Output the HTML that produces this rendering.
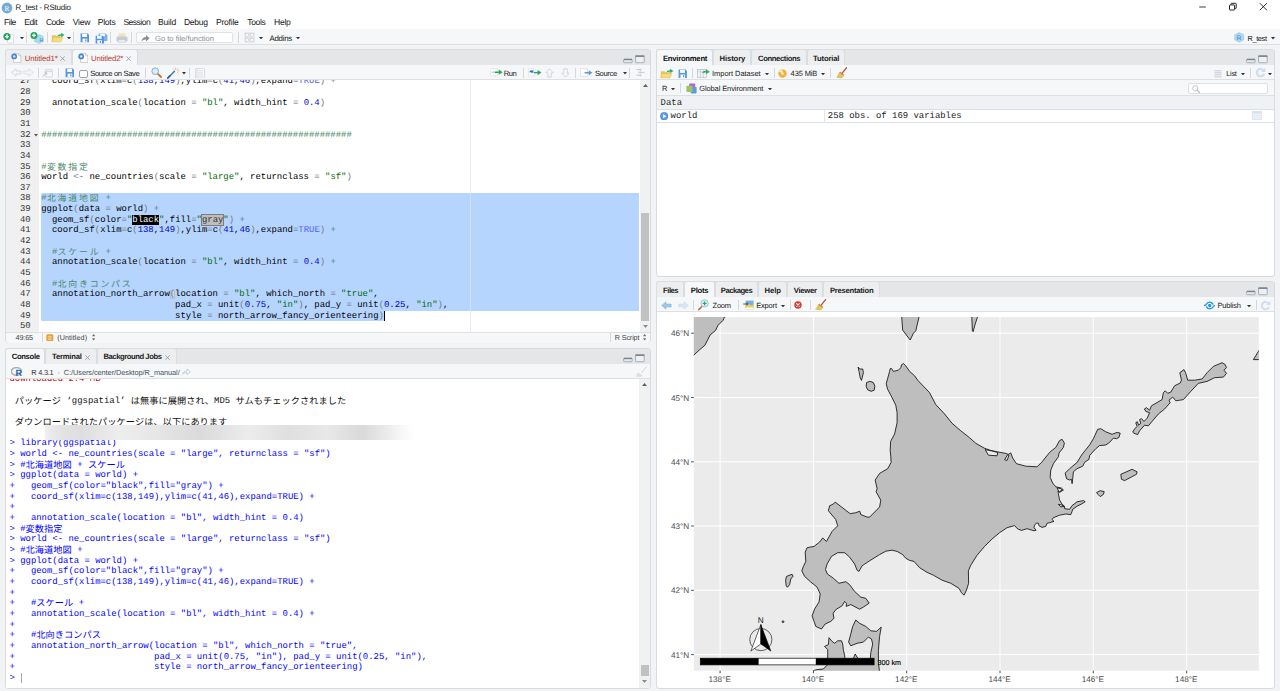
<!DOCTYPE html>
<html lang="ja"><head><meta charset="utf-8"><title>R_test - RStudio</title>
<style>
html,body{margin:0;padding:0;}
body{width:1280px;height:691px;overflow:hidden;position:relative;background:#F1F3F5;font-family:"Liberation Sans",sans-serif;text-rendering:geometricPrecision;-webkit-font-smoothing:antialiased;}
svg text{text-rendering:geometricPrecision;}
.b{position:absolute;display:block;}
.t{position:absolute;white-space:pre;}
.ed{overflow:hidden;background:#fff;}
.cl{position:absolute;white-space:pre;font-family:"Liberation Mono",monospace;font-size:8.93px;line-height:10.65px;height:10.65px;color:#000;}
.cl i{font-style:normal;}
.ln{position:absolute;left:0;text-align:right;font-family:"Liberation Mono",monospace;font-size:8.93px;line-height:10.65px;color:#333;}
.k{color:#4C886B;} .s{color:#036A07;} .n{color:#0000CD;} .o{color:#687687;} .p{color:#7A7A7A;} .c{color:#585CF6;}
.cb{font-weight:normal;background:#000;color:#fff;}
.cg{font-weight:normal;background:#BEBEBE;color:#333;outline:0.6px solid #7d7d7d;outline-offset:-0.6px;}
.cj{display:inline-block;vertical-align:top;margin-top:-0.8px;overflow:visible;}
.je,.jc{display:inline-block;vertical-align:top;white-space:pre;overflow:visible;box-sizing:border-box;font-family:"Liberation Sans","Noto Sans CJK JP",sans-serif;line-height:10.65px;height:10.65px;}
.je{font-size:8.9px;letter-spacing:1.82px;padding-left:0.3px;}
.jc{font-size:9.2px;letter-spacing:0.06px;padding-left:0.03px;}
</style></head>
<body>
<div class="b" style="left:0.00px;top:0.00px;width:1280.00px;height:14.50px;background:#fff;"></div>
<svg class="b" style="left:1.00px;top:1.50px;" width="12" height="12" viewBox="0 0 12 12"><circle cx="6" cy="6" r="5.4" fill="#75AADB"/><text x="6" y="8.6" font-size="7.4" text-anchor="middle" fill="#fff" font-family="Liberation Serif,serif">R</text></svg>
<span class="t" style="left:15.60px;top:1.63px;font-size:8.0px;line-height:12px;color:#1a1a1a;letter-spacing:-0.218px;">R_test - RStudio</span>
<svg class="b" style="left:1196.00px;top:0.00px;" width="80" height="14" viewBox="0 0 80 14"><path d="M3.2 7H9.8" stroke="#6A6A6A" stroke-width="1.3"/><rect x="33.5" y="4.9" width="5.1" height="5.1" rx="0.6" fill="none" stroke="#222" stroke-width="1"/><path d="M35 4.6V3.9Q35 3.3 35.6 3.3H39.6Q40.2 3.3 40.2 3.9V7.9Q40.2 8.5 39.6 8.5H38.9" fill="none" stroke="#222" stroke-width="1"/><path d="M63.8 3.2L70.8 10.2M70.8 3.2L63.8 10.2" stroke="#222" stroke-width="0.95"/></svg>
<div class="b" style="left:0.00px;top:14.50px;width:1280.00px;height:14.50px;background:#fff;"></div>
<span class="t" style="left:4.10px;top:16.42px;font-size:8.6px;line-height:12px;color:#222;letter-spacing:-0.515px;">File</span>
<span class="t" style="left:24.30px;top:16.42px;font-size:8.6px;line-height:12px;color:#222;letter-spacing:-0.530px;">Edit</span>
<span class="t" style="left:46.00px;top:16.42px;font-size:8.6px;line-height:12px;color:#222;letter-spacing:-0.590px;">Code</span>
<span class="t" style="left:72.80px;top:16.42px;font-size:8.6px;line-height:12px;color:#222;letter-spacing:-0.271px;">View</span>
<span class="t" style="left:97.80px;top:16.42px;font-size:8.6px;line-height:12px;color:#222;letter-spacing:-0.304px;">Plots</span>
<span class="t" style="left:123.40px;top:16.42px;font-size:8.6px;line-height:12px;color:#222;letter-spacing:-0.542px;">Session</span>
<span class="t" style="left:158.00px;top:16.42px;font-size:8.6px;line-height:12px;color:#222;letter-spacing:-0.225px;">Build</span>
<span class="t" style="left:184.00px;top:16.42px;font-size:8.6px;line-height:12px;color:#222;letter-spacing:-0.349px;">Debug</span>
<span class="t" style="left:216.00px;top:16.42px;font-size:8.6px;line-height:12px;color:#222;letter-spacing:-0.254px;">Profile</span>
<span class="t" style="left:247.30px;top:16.42px;font-size:8.6px;line-height:12px;color:#222;letter-spacing:-0.395px;">Tools</span>
<span class="t" style="left:274.00px;top:16.42px;font-size:8.6px;line-height:12px;color:#222;letter-spacing:-0.272px;">Help</span>
<div class="b" style="left:0.00px;top:29.00px;width:1280.00px;height:15.60px;background:#F5F7F8;border-bottom:1px solid #DCE0E3;box-sizing:border-box;"></div>
<svg class="b" style="left:3.40px;top:31.60px;" width="13" height="12" viewBox="0 0 13 12"><path d="M4.5 2.5H10.5V11H4.5Z" fill="#fff" stroke="#C9CED2" stroke-width="0.6"/><circle cx="4" cy="4.6" r="3.6" fill="#21A45A"/><path d="M4 2.6V6.6M2 4.6H6" stroke="#fff" stroke-width="1.3"/></svg>
<svg class="b" style="left:19.60px;top:37.00px;" width="4" height="2.4" viewBox="0 0 4 2.4"><path d="M0 0H4L2 2.4Z" fill="#333"/></svg>
<div class="b" style="left:26.00px;top:32.00px;width:1.00px;height:11.00px;background:#D4D8DB;"></div>
<svg class="b" style="left:30.20px;top:31.40px;" width="14" height="13" viewBox="0 0 14 13"><path d="M4.5 5.2L9 3.6L13.2 5.2V10.6L9 12.4L4.5 10.6Z" fill="#A9D7F0" stroke="#8FC8E8" stroke-width="0.5"/><path d="M4.5 5.2L9 6.8L13.2 5.2M9 6.8V12.4" stroke="#B9DDF3" stroke-width="0.5" fill="none"/><text x="9.4" y="10.8" font-size="5.6" fill="#4A88C4" font-family="Liberation Sans,sans-serif">R</text><circle cx="4" cy="4.4" r="3.5" fill="#21A45A"/><path d="M4 2.5V6.3M2.1 4.4H5.9" stroke="#fff" stroke-width="1.2"/></svg>
<div class="b" style="left:46.50px;top:32.00px;width:1.00px;height:11.00px;background:#D4D8DB;"></div>
<svg class="b" style="left:51.20px;top:32.40px;" width="14" height="11" viewBox="0 0 14 11"><path d="M0.8 3.2H4.4L5.4 4.2H10.2V9.8H0.8Z" fill="#E9C45C"/><path d="M0.6 9.9L2.4 5.6H11.8L10 9.9Z" fill="#F7DC83" stroke="#D9B24A" stroke-width="0.4"/><path d="M6.2 4.6C6.8 2.6 8.6 2 10.2 2.2V0.8L13.4 3L10.2 5.2V3.8C8.8 3.6 7.4 3.8 6.2 4.6Z" fill="#2BAE66"/></svg>
<svg class="b" style="left:67.00px;top:37.00px;" width="4" height="2.4" viewBox="0 0 4 2.4"><path d="M0 0H4L2 2.4Z" fill="#333"/></svg>
<div class="b" style="left:73.10px;top:32.00px;width:1.00px;height:11.00px;background:#D4D8DB;"></div>
<svg class="b" style="left:79.60px;top:33.00px;" width="9.8" height="9.8" viewBox="0 0 10 10"><path d="M0.6 0.6H8L9.4 2V9.4H0.6Z" fill="#5796DE"/><rect x="2.2" y="0.9" width="5" height="3.2" fill="#fff"/><rect x="2.6" y="5.8" width="4.8" height="3.6" fill="#fff"/><rect x="5.3" y="6.5" width="1.3" height="2.2" fill="#5796DE"/></svg>
<svg class="b" style="left:94.80px;top:32.60px;" width="13" height="11" viewBox="0 0 13 11"><path d="M3.6 0.5H10.6L12.4 2.2V8H3.6Z" fill="#7FB5E6"/><rect x="5.2" y="0.8" width="4.6" height="2.4" fill="#fff"/><path d="M0.6 2.8H7.6L9 4.2V10.6H0.6Z" fill="#5796DE"/><rect x="2" y="3.1" width="4.6" height="2.6" fill="#fff"/><rect x="2.3" y="7.2" width="4.6" height="3.4" fill="#fff"/><rect x="4.8" y="7.9" width="1.2" height="2" fill="#5796DE"/></svg>
<div class="b" style="left:110.10px;top:32.00px;width:1.00px;height:11.00px;background:#D4D8DB;"></div>
<svg class="b" style="left:115.60px;top:32.60px;" width="12" height="10" viewBox="0 0 12 10"><rect x="2.6" y="0.4" width="6.8" height="4" fill="#F3E3B4"/><rect x="0.5" y="3.6" width="11" height="5" rx="1.2" fill="#C5CCD6"/><rect x="2.2" y="6.6" width="7.6" height="2.8" fill="#E8ECF1" stroke="#B5BDC9" stroke-width="0.4"/></svg>
<div class="b" style="left:130.70px;top:32.00px;width:1.00px;height:11.00px;background:#D4D8DB;"></div>
<div class="b" style="left:136.00px;top:32.40px;width:96.60px;height:10.80px;background:#fff;border:1px solid #DFE3E6;border-radius:2px;box-sizing:border-box;"></div>
<svg class="b" style="left:140.60px;top:34.00px;" width="9" height="8" viewBox="0 0 9 8"><path d="M0.4 7.6C0.8 4.6 2.6 3 5 3V1L8.6 4.2L5 7.4V5.4C3.2 5.3 1.6 6 0.4 7.6Z" fill="#8A9096"/></svg>
<span class="t" style="left:155.00px;top:32.77px;font-size:7.6px;line-height:12px;color:#8A8F94;letter-spacing:-0.008px;">Go to file/function</span>
<div class="b" style="left:238.30px;top:32.00px;width:1.00px;height:11.00px;background:#D4D8DB;"></div>
<svg class="b" style="left:244.40px;top:32.20px;" width="11" height="11" viewBox="0 0 11 11"><rect x="0.3" y="0.3" width="10.4" height="10.4" rx="1" fill="#E3E6E9"/><g fill="#F5F7F8" stroke="#C4C9CE" stroke-width="0.5"><rect x="1.5" y="1.5" width="3.2" height="3.2"/><rect x="6.3" y="1.5" width="3.2" height="3.2"/><rect x="1.5" y="6.3" width="3.2" height="3.2"/><rect x="6.3" y="6.3" width="3.2" height="3.2"/></g></svg>
<svg class="b" style="left:259.40px;top:37.00px;" width="4" height="2.4" viewBox="0 0 4 2.4"><path d="M0 0H4L2 2.4Z" fill="#333"/></svg>
<span class="t" style="left:269.40px;top:32.66px;font-size:7.9px;line-height:12px;color:#222;letter-spacing:-0.259px;">Addins</span>
<svg class="b" style="left:296.20px;top:37.00px;" width="4" height="2.4" viewBox="0 0 4 2.4"><path d="M0 0H4L2 2.4Z" fill="#333"/></svg>
<svg class="b" style="left:1234.20px;top:32.20px;" width="10.4" height="10.8" viewBox="0 0 10.4 10.8"><path d="M0.6 2.8L5.2 0.6L9.8 2.8V8L5.2 10.2L0.6 8Z" fill="#A9D7F0" stroke="#93CBEA" stroke-width="0.5"/><path d="M0.6 2.8L5.2 5L9.8 2.8" stroke="#C9E7F7" stroke-width="0.5" fill="none"/><text x="5.2" y="7.8" text-anchor="middle" font-size="6.4" fill="#3F7FBF" font-family="Liberation Sans,sans-serif">R</text></svg>
<span class="t" style="left:1247.50px;top:32.84px;font-size:7.4px;line-height:12px;color:#222;letter-spacing:-0.381px;">R_test</span>
<svg class="b" style="left:1271.00px;top:37.40px;" width="4" height="2.4" viewBox="0 0 4 2.4"><path d="M0 0H4L2 2.4Z" fill="#333"/></svg>
<div class="b" style="left:4.80px;top:48.60px;width:645.80px;height:294.80px;background:#fff;border:1px solid #D8DCDF;border-radius:3px;box-sizing:border-box;"></div>
<div class="b" style="left:5.80px;top:49.60px;width:643.80px;height:15.40px;background:#E4E6E7;border-radius:2px 2px 0 0;"></div>
<div class="b" style="left:4.80px;top:49.10px;width:66.80px;height:15.90px;background:#ECEEEF;border:1px solid #DADEE0;border-bottom:none;border-radius:3px 3px 0 0;box-sizing:border-box;"></div>
<div class="b" style="left:71.60px;top:48.60px;width:66.60px;height:17.00px;background:#F5F7F8;border:1px solid #D8DCDF;border-bottom:none;border-radius:3px 3px 0 0;box-sizing:border-box;"></div>
<svg class="b" style="left:11.40px;top:52.80px;" width="10.5" height="10" viewBox="0 0 10.5 10"><path d="M2.6 0.6H7.6L9.8 2.8V9.4H2.6Z" fill="#fff" stroke="#A9B0B7" stroke-width="0.6"/><path d="M7.6 0.6V2.8H9.8" fill="none" stroke="#A9B0B7" stroke-width="0.5"/><circle cx="3.2" cy="3.4" r="2.9" fill="#4F86C6"/><circle cx="3.2" cy="3.4" r="1.2" fill="#DCE9F6"/></svg>
<span class="t" style="left:24.80px;top:52.70px;font-size:7.8px;line-height:12px;color:#BE3A34;letter-spacing:-0.102px;">Untitled1*</span>
<svg class="b" style="left:59.60px;top:55.80px;" width="5.2" height="5.2" viewBox="0 0 5.2 5.2"><path d="M0.4 0.4L4.8 4.8M4.8 0.4L0.4 4.8" stroke="#9AA0A6" stroke-width="0.95"/></svg>
<svg class="b" style="left:77.60px;top:52.80px;" width="10.5" height="10" viewBox="0 0 10.5 10"><path d="M2.6 0.6H7.6L9.8 2.8V9.4H2.6Z" fill="#fff" stroke="#A9B0B7" stroke-width="0.6"/><path d="M7.6 0.6V2.8H9.8" fill="none" stroke="#A9B0B7" stroke-width="0.5"/><circle cx="3.2" cy="3.4" r="2.9" fill="#4F86C6"/><circle cx="3.2" cy="3.4" r="1.2" fill="#DCE9F6"/></svg>
<span class="t" style="left:91.00px;top:52.70px;font-size:7.8px;line-height:12px;color:#BE3A34;letter-spacing:-0.162px;">Untitled2*</span>
<svg class="b" style="left:126.40px;top:55.80px;" width="5.2" height="5.2" viewBox="0 0 5.2 5.2"><path d="M0.4 0.4L4.8 4.8M4.8 0.4L0.4 4.8" stroke="#9AA0A6" stroke-width="0.95"/></svg>
<svg class="b" style="left:622.80px;top:54.60px;" width="23" height="9" viewBox="0 0 23 9"><rect x="0.6" y="4.2" width="8.6" height="3.5" rx="0.8" fill="#E6E9EC" stroke="#97A1A9" stroke-width="0.8"/><path d="M0.8 4.5H9" stroke="#77838D" stroke-width="1.3"/><rect x="12.6" y="0.7" width="8.6" height="7" rx="0.6" fill="#EEF0F2" stroke="#97A1A9" stroke-width="0.8"/><path d="M12.4 1.2H21.4" stroke="#77838D" stroke-width="1.5"/></svg>
<div class="b" style="left:5.80px;top:65.00px;width:643.80px;height:14.60px;background:#F5F7F8;border-bottom:1px solid #DCE0E3;box-sizing:border-box;"></div>
<svg class="b" style="left:11.40px;top:68.20px;" width="23" height="9" viewBox="0 0 23 9"><path d="M0.6 4.5L5 0.8V3H10V6H5V8.2Z" fill="#F3F5F6" stroke="#C9CFD4" stroke-width="0.7"/><path d="M22.2 4.5L17.8 0.8V3H12.8V6H17.8V8.2Z" fill="#F3F5F6" stroke="#D5DADE" stroke-width="0.7"/></svg>
<div class="b" style="left:37.90px;top:67.60px;width:1.00px;height:10.00px;background:#D4D8DB;"></div>
<svg class="b" style="left:42.40px;top:67.80px;" width="11" height="10" viewBox="0 0 11 10"><rect x="3.2" y="1.4" width="7.2" height="7.6" rx="0.8" fill="#F7F8F9" stroke="#C9CFD4" stroke-width="0.7"/><path d="M3.2 3.2H10.4" stroke="#C9CFD4" stroke-width="1"/><path d="M0.6 8.6L4.6 4.8M4.6 4.8H2.6M4.6 4.8V6.8" stroke="#B4BBC1" stroke-width="0.8" fill="none"/></svg>
<div class="b" style="left:58.30px;top:67.60px;width:1.00px;height:10.00px;background:#D4D8DB;"></div>
<svg class="b" style="left:64.60px;top:67.80px;" width="9.8" height="9.8" viewBox="0 0 10 10"><path d="M0.6 0.6H8L9.4 2V9.4H0.6Z" fill="#5796DE"/><rect x="2.2" y="0.9" width="5" height="3.2" fill="#fff"/><rect x="2.6" y="5.8" width="4.8" height="3.6" fill="#fff"/><rect x="5.3" y="6.5" width="1.3" height="2.2" fill="#5796DE"/></svg>
<div class="b" style="left:79.40px;top:69.60px;width:8.40px;height:8.40px;background:#fff;border:1px solid #9CA1A6;border-radius:2px;box-sizing:border-box;"></div>
<span class="t" style="left:90.20px;top:67.77px;font-size:7.6px;line-height:12px;color:#222;letter-spacing:-0.349px;">Source on Save</span>
<div class="b" style="left:145.10px;top:67.60px;width:1.00px;height:10.00px;background:#D4D8DB;"></div>
<svg class="b" style="left:151.40px;top:67.40px;" width="11.0" height="11.0" viewBox="0 0 11 11"><path d="M6.4 6.4L10 10" stroke="#B4783C" stroke-width="1.8" stroke-linecap="round"/><circle cx="4.2" cy="4.2" r="3.3" fill="#DCEBF8" stroke="#7FA6CC" stroke-width="0.9"/></svg>
<svg class="b" style="left:167.20px;top:66.80px;" width="13" height="12" viewBox="0 0 13 12"><path d="M0.8 11L7.4 4.4" stroke="#4A7DB8" stroke-width="1.5" stroke-linecap="round"/><path d="M0.8 11L3 8.8" stroke="#2F5E96" stroke-width="1.6" stroke-linecap="round"/><g stroke="#E8945A" stroke-width="0.6"><path d="M8.6 0.6V2.6M11 1.4L9.8 2.8M12.2 3.8H10.2M11.4 6.2L10 5M6.2 1.6L7.4 2.8"/></g></svg>
<svg class="b" style="left:182.40px;top:72.20px;" width="4" height="2.4" viewBox="0 0 4 2.4"><path d="M0 0H4L2 2.4Z" fill="#333"/></svg>
<div class="b" style="left:188.70px;top:67.60px;width:1.00px;height:10.00px;background:#D4D8DB;"></div>
<svg class="b" style="left:195.20px;top:67.60px;" width="10" height="10.6" viewBox="0 0 10 10.6"><rect x="0.5" y="0.5" width="9" height="9.6" rx="0.8" fill="#F6F7F8" stroke="#CCD1D6" stroke-width="0.7"/><path d="M2.2 2.6H8M2.2 4.4H8M2.2 6.2H8M2.2 8H8" stroke="#D5DADF" stroke-width="0.6"/><path d="M1.8 0.6V10" stroke="#D9C5C5" stroke-width="0.5"/></svg>
<svg class="b" style="left:489.60px;top:68.40px;" width="13" height="8.4" viewBox="0 0 13 8.4"><rect x="0.4" y="0.6" width="7.4" height="7.2" rx="0.8" fill="#fff" stroke="#D5DADF" stroke-width="0.6"/><path d="M1.6 4.2H4" stroke="#8BB4DE" stroke-width="0.8"/><path d="M4.6 3.5H8.8V1.6L12.6 4.2L8.8 6.8V4.9H4.6Z" fill="#2AA35C"/></svg>
<span class="t" style="left:503.80px;top:67.77px;font-size:7.6px;line-height:12px;color:#222;letter-spacing:-0.514px;">Run</span>
<div class="b" style="left:522.70px;top:67.60px;width:1.00px;height:10.00px;background:#D4D8DB;"></div>
<svg class="b" style="left:527.60px;top:67.80px;" width="14" height="9.4" viewBox="0 0 14 9.4"><rect x="0.4" y="0.8" width="6.6" height="7.2" rx="0.8" fill="#fff" stroke="#D5DADF" stroke-width="0.6"/><path d="M1.4 4.4C1.4 2.4 3.4 1.8 4.6 2.8L5.4 1.8V4.8H2.6L3.6 3.8" fill="#2F6FCE"/><path d="M6 3.9H9.6V2L13.4 4.6L9.6 7.2V5.3H6Z" fill="#2AA35C"/></svg>
<svg class="b" style="left:545.40px;top:67.80px;" width="9" height="10" viewBox="0 0 9 10"><path d="M4.5 0.8L8.2 4.8H6.2V9.2H2.8V4.8H0.8Z" fill="#F7F8F9" stroke="#C4CAD0" stroke-width="0.7"/></svg>
<svg class="b" style="left:561.40px;top:67.80px;" width="9" height="10" viewBox="0 0 9 10"><path d="M4.5 9.2L8.2 5.2H6.2V0.8H2.8V5.2H0.8Z" fill="#F7F8F9" stroke="#C4CAD0" stroke-width="0.7"/></svg>
<div class="b" style="left:575.10px;top:67.60px;width:1.00px;height:10.00px;background:#D4D8DB;"></div>
<svg class="b" style="left:580.00px;top:67.80px;" width="13" height="9.4" viewBox="0 0 13 9.4"><rect x="0.4" y="0.6" width="7" height="8" rx="0.8" fill="#fff" stroke="#C9CFD4" stroke-width="0.6"/><path d="M4.6 4H8.8V2.2L12.4 4.7L8.8 7.2V5.4H4.6Z" fill="#5B9BD8"/></svg>
<span class="t" style="left:594.90px;top:67.77px;font-size:7.6px;line-height:12px;color:#222;letter-spacing:-0.364px;">Source</span>
<svg class="b" style="left:623.00px;top:72.20px;" width="4" height="2.4" viewBox="0 0 4 2.4"><path d="M0 0H4L2 2.4Z" fill="#333"/></svg>
<div class="b" style="left:629.30px;top:67.60px;width:1.00px;height:10.00px;background:#D4D8DB;"></div>
<svg class="b" style="left:636.40px;top:68.20px;" width="9" height="9" viewBox="0 0 9 9"><path d="M0.4 1.6H5.6M2.6 4.4H8.4M0.4 7.2H5.6" stroke="#BCC3C9" stroke-width="0.9"/><path d="M4.2 0.4V8.6" stroke="#C8CED3" stroke-width="0.7"/></svg>
<div class="b ed" style="left:5.8px;top:79.6px;width:643.80px;height:252.60px;"><div class="b" style="left:0;top:0;width:32.90px;height:252.60px;background:#F0F0F0;"></div><div class="b" style="left:35.45px;top:113.90px;width:598.15px;height:117.15px;background:#B5D5FF;border-radius:1.5px 0 0 0;"></div><div class="b" style="left:35.45px;top:230.85px;width:343.04px;height:10.85px;background:#B5D5FF;border-radius:0 0 1.5px 1.5px;"></div><div class="b" style="left:378.19px;top:231.05px;width:1px;height:10.65px;background:#000;"></div><div class="b" style="left:464.25px;top:0;width:1px;height:252.60px;background:rgba(225,228,232,0.75);"></div><div class="b" style="left:164.09px;top:210.25px;width:4.96px;height:9.65px;border:0.6px solid #C0C0C0;box-sizing:border-box;"></div><div class="ln" style="top:-3.25px;width:24.80px;">27</div><div class="cl" style="left:35.45px;top:-3.25px;">  coord_sf<i class="p">(</i>xlim<i class="o">=</i>c<i class="p">(</i><i class="n">138</i>,<i class="n">149</i><i class="p">)</i>,ylim<i class="o">=</i>c<i class="p">(</i><i class="n">41</i>,<i class="n">46</i><i class="p">)</i>,expand<i class="o">=</i><i class="c">TRUE</i><i class="p">)</i> <i class="o">+</i></div><div class="ln" style="top:7.40px;width:24.80px;">28</div><div class="ln" style="top:18.05px;width:24.80px;">29</div><div class="cl" style="left:35.45px;top:18.05px;">  annotation_scale<i class="p">(</i>location <i class="o">=</i> <i class="s">&quot;bl&quot;</i>, width_hint <i class="o">=</i> <i class="n">0.4</i><i class="p">)</i></div><div class="ln" style="top:28.70px;width:24.80px;">30</div><div class="ln" style="top:39.35px;width:24.80px;">31</div><div class="ln" style="top:50.00px;width:24.80px;">32</div><svg class="b" style="left:27.80px;top:54.40px" width="4" height="3" viewBox="0 0 4 3"><path d="M0 0H4L2 2.6Z" fill="#555"/></svg><div class="cl" style="left:35.45px;top:50.00px;"><i class="k">##########################################################</i></div><div class="ln" style="top:60.65px;width:24.80px;">33</div><div class="ln" style="top:71.30px;width:24.80px;">34</div><div class="ln" style="top:81.95px;width:24.80px;">35</div><div class="cl" style="left:35.45px;top:81.95px;"><i class="k">#<span class="je" style="width:42.88px;">変数指定</span></i></div><div class="ln" style="top:92.60px;width:24.80px;">36</div><div class="cl" style="left:35.45px;top:92.60px;">world <i class="o">&lt;-</i> ne_countries<i class="p">(</i>scale <i class="o">=</i> <i class="s">&quot;large&quot;</i>, returnclass <i class="o">=</i> <i class="s">&quot;sf&quot;</i><i class="p">)</i></div><div class="ln" style="top:103.25px;width:24.80px;">37</div><div class="ln" style="top:113.90px;width:24.80px;">38</div><div class="cl" style="left:35.45px;top:113.90px;"><i class="k">#<span class="je" style="width:53.60px;">北海道地図</span> +</i></div><div class="ln" style="top:124.55px;width:24.80px;">39</div><div class="cl" style="left:35.45px;top:124.55px;">ggplot<i class="p">(</i>data <i class="o">=</i> world<i class="p">)</i> <i class="o">+</i></div><div class="ln" style="top:135.20px;width:24.80px;">40</div><div class="cl" style="left:35.45px;top:135.20px;">  geom_sf<i class="p">(</i>color<i class="o">=</i><i class="s">"<b class="cb">black</b>"</i>,fill<i class="o">=</i><i class="s">"<b class="cg">gray</b>"</i><i class="p">)</i> <i class="o">+</i></div><div class="ln" style="top:145.85px;width:24.80px;">41</div><div class="cl" style="left:35.45px;top:145.85px;">  coord_sf<i class="p">(</i>xlim<i class="o">=</i>c<i class="p">(</i><i class="n">138</i>,<i class="n">149</i><i class="p">)</i>,ylim<i class="o">=</i>c<i class="p">(</i><i class="n">41</i>,<i class="n">46</i><i class="p">)</i>,expand<i class="o">=</i><i class="c">TRUE</i><i class="p">)</i> <i class="o">+</i></div><div class="ln" style="top:156.50px;width:24.80px;">42</div><div class="ln" style="top:167.15px;width:24.80px;">43</div><div class="cl" style="left:35.45px;top:167.15px;">  <i class="k">#<span class="je" style="width:42.88px;">スケール</span> +</i></div><div class="ln" style="top:177.80px;width:24.80px;">44</div><div class="cl" style="left:35.45px;top:177.80px;">  annotation_scale<i class="p">(</i>location <i class="o">=</i> <i class="s">&quot;bl&quot;</i>, width_hint <i class="o">=</i> <i class="n">0.4</i><i class="p">)</i> <i class="o">+</i></div><div class="ln" style="top:188.45px;width:24.80px;">45</div><div class="ln" style="top:199.10px;width:24.80px;">46</div><div class="cl" style="left:35.45px;top:199.10px;">  <i class="k">#<span class="je" style="width:75.04px;">北向きコンパス</span></i></div><div class="ln" style="top:209.75px;width:24.80px;">47</div><div class="cl" style="left:35.45px;top:209.75px;">  annotation_north_arrow<i class="p">(</i>location <i class="o">=</i> <i class="s">&quot;bl&quot;</i>, which_north <i class="o">=</i> <i class="s">&quot;true&quot;</i>,</div><div class="ln" style="top:220.40px;width:24.80px;">48</div><div class="cl" style="left:35.45px;top:220.40px;">                         pad_x <i class="o">=</i> unit<i class="p">(</i><i class="n">0.75</i>, <i class="s">&quot;in&quot;</i><i class="p">)</i>, pad_y <i class="o">=</i> unit<i class="p">(</i><i class="n">0.25</i>, <i class="s">&quot;in&quot;</i><i class="p">)</i>,</div><div class="ln" style="top:231.05px;width:24.80px;">49</div><div class="cl" style="left:35.45px;top:231.05px;">                         style <i class="o">=</i> north_arrow_fancy_orienteering<i class="p">)</i></div><div class="ln" style="top:241.70px;width:24.80px;">50</div><div class="b" style="left:633.80px;top:0;width:10.00px;height:252.60px;background:#F1F1F1;"></div><svg class="b" style="left:636.80px;top:4.40px" width="5" height="3" viewBox="0 0 5 3"><path d="M0 3H5L2.5 0Z" fill="#606060"/></svg><svg class="b" style="left:636.80px;top:245.40px" width="5" height="3" viewBox="0 0 5 3"><path d="M0 0H5L2.5 3Z" fill="#8A8A8A"/></svg><div class="b" style="left:635.00px;top:133.40px;width:8.1px;height:107.8px;background:#C1C1C1;"></div></div>
<div class="b" style="left:5.80px;top:332.20px;width:643.80px;height:10.40px;background:#F5F7F8;border-top:1px solid #DCE0E3;box-sizing:border-box;border-radius:0 0 2px 2px;"></div>
<span class="t" style="left:15.60px;top:331.91px;font-size:7.2px;line-height:12px;color:#444;letter-spacing:-0.124px;">49:65</span>
<div class="b" style="left:41.90px;top:333.40px;width:1.00px;height:8.60px;background:#D4D8DB;"></div>
<svg class="b" style="left:46.20px;top:333.80px;" width="7.6" height="7.6" viewBox="0 0 7.6 7.6"><rect x="0.3" y="0.3" width="7" height="7" rx="1.2" fill="#E8A43A"/><path d="M2.2 2.6H5.4M2.2 4H5.4M2.2 5.4H5.4" stroke="#FFF3DC" stroke-width="0.6"/></svg>
<span class="t" style="left:57.20px;top:331.91px;font-size:7.2px;line-height:12px;color:#444;letter-spacing:0.079px;">(Untitled)</span>
<svg class="b" style="left:91.50px;top:334.40px;" width="3.4" height="6.4" viewBox="0 0 3.4 6.4"><path d="M0 2.2H3.4L1.7 0ZM0 4.2H3.4L1.7 6.4Z" fill="#6A6A6A"/></svg>
<div class="b" style="left:610.30px;top:333.40px;width:1.00px;height:8.60px;background:#D4D8DB;"></div>
<span class="t" style="left:614.80px;top:331.91px;font-size:7.2px;line-height:12px;color:#444;letter-spacing:-0.126px;">R Script</span>
<svg class="b" style="left:642.90px;top:334.40px;" width="3.4" height="6.4" viewBox="0 0 3.4 6.4"><path d="M0 2.2H3.4L1.7 0ZM0 4.2H3.4L1.7 6.4Z" fill="#6A6A6A"/></svg>
<div class="b" style="left:4.80px;top:347.60px;width:645.80px;height:341.40px;background:#fff;border:1px solid #D8DCDF;border-radius:3px;box-sizing:border-box;"></div>
<div class="b" style="left:5.80px;top:348.60px;width:643.80px;height:15.80px;background:#E4E6E7;border-radius:2px 2px 0 0;"></div>
<div class="b" style="left:4.80px;top:347.60px;width:40.20px;height:17.20px;background:#F5F7F8;border:1px solid #D8DCDF;border-bottom:none;border-radius:3px 3px 0 0;box-sizing:border-box;"></div>
<div class="b" style="left:45.00px;top:348.10px;width:52.00px;height:16.10px;background:#ECEEEF;border:1px solid #DADEE0;border-bottom:none;border-radius:3px 3px 0 0;box-sizing:border-box;"></div>
<div class="b" style="left:97.00px;top:348.10px;width:80.20px;height:16.10px;background:#ECEEEF;border:1px solid #DADEE0;border-bottom:none;border-radius:3px 3px 0 0;box-sizing:border-box;"></div>
<span class="t" style="left:11.70px;top:350.73px;font-size:7.7px;line-height:12px;color:#111;letter-spacing:-0.339px;font-weight:bold;">Console</span>
<span class="t" style="left:52.10px;top:350.73px;font-size:7.7px;line-height:12px;color:#222;letter-spacing:-0.253px;font-weight:bold;">Terminal</span>
<svg class="b" style="left:84.80px;top:354.60px;" width="5.2" height="5.2" viewBox="0 0 5.2 5.2"><path d="M0.4 0.4L4.8 4.8M4.8 0.4L0.4 4.8" stroke="#9AA0A6" stroke-width="0.95"/></svg>
<span class="t" style="left:103.40px;top:350.73px;font-size:7.7px;line-height:12px;color:#222;letter-spacing:-0.456px;font-weight:bold;">Background Jobs</span>
<svg class="b" style="left:165.00px;top:354.60px;" width="5.2" height="5.2" viewBox="0 0 5.2 5.2"><path d="M0.4 0.4L4.8 4.8M4.8 0.4L0.4 4.8" stroke="#9AA0A6" stroke-width="0.95"/></svg>
<svg class="b" style="left:622.80px;top:353.60px;" width="23" height="9" viewBox="0 0 23 9"><rect x="0.6" y="4.2" width="8.6" height="3.5" rx="0.8" fill="#E6E9EC" stroke="#97A1A9" stroke-width="0.8"/><path d="M0.8 4.5H9" stroke="#77838D" stroke-width="1.3"/><rect x="12.6" y="0.7" width="8.6" height="7" rx="0.6" fill="#EEF0F2" stroke="#97A1A9" stroke-width="0.8"/><path d="M12.4 1.2H21.4" stroke="#77838D" stroke-width="1.5"/></svg>
<div class="b" style="left:5.80px;top:364.20px;width:643.80px;height:15.00px;background:#F5F7F8;border-bottom:1px solid #DCE0E3;box-sizing:border-box;"></div>
<svg class="b" style="left:11.40px;top:366.60px;" width="12" height="10" viewBox="0 0 12 10"><ellipse cx="5.4" cy="4.4" rx="5" ry="3.8" fill="none" stroke="#A8ADB3" stroke-width="1.5"/><text x="4.6" y="9.4" font-size="9" font-weight="bold" fill="#2166B5" font-family="Liberation Sans,sans-serif">R</text></svg>
<span class="t" style="left:31.30px;top:366.84px;font-size:7.4px;line-height:12px;color:#333;letter-spacing:-0.237px;">R 4.3.1</span>
<span class="t" style="left:57.60px;top:366.84px;font-size:7.4px;line-height:12px;color:#555;letter-spacing:-0.065px;">·</span>
<span class="t" style="left:63.80px;top:366.84px;font-size:7.4px;line-height:12px;color:#4A5560;letter-spacing:-0.074px;">C:/Users/center/Desktop/R_manual/</span>
<svg class="b" style="left:182.00px;top:368.00px;" width="9" height="7" viewBox="0 0 9 7"><path d="M0.6 6.4C1 4 2.6 3 5 3V1L8.4 3.8L5 6.4V4.6C3.4 4.6 1.8 5 0.6 6.4Z" fill="none" stroke="#B8C0C8" stroke-width="0.7"/></svg>
<svg class="b" style="left:634.60px;top:366.00px;" width="12.4" height="11.4" viewBox="0 0 12.4 11.4"><path d="M11.6 0.6L6.4 7" stroke="#D9DEE3" stroke-width="1.1"/><path d="M3 6.4L7.6 9.8L5.4 11L0.6 10.4Z" fill="#DADFE4"/></svg>
<div class="b ed" style="left:5.8px;top:379.2px;width:643.80px;height:308.80px;"><div class="cl" style="left:3.70px;top:-4.78px;color:#C5060B;">downloaded 2.4 MB</div><div class="cl" style="left:3.70px;top:16.54px;color:#111;"> <span class="jc" style="width:46.30px;">パッケージ</span> ‘ggspatial’ <span class="jc" style="width:83.34px;">は無事に展開され、</span>MD5 <span class="jc" style="width:111.12px;">サムもチェックされました</span></div><div class="cl" style="left:3.70px;top:37.86px;color:#111;"> <span class="jc" style="width:212.98px;">ダウンロードされたパッケージは、以下にあります</span></div><div class="cl" style="left:3.70px;top:59.18px;color:#0000FF;">&gt; library(ggspatial)</div><div class="cl" style="left:3.70px;top:69.84px;color:#0000FF;">&gt; world &lt;- ne_countries(scale = &quot;large&quot;, returnclass = &quot;sf&quot;)</div><div class="cl" style="left:3.70px;top:80.50px;color:#0000FF;">&gt; #<span class="jc" style="width:46.30px;">北海道地図</span> + <span class="jc" style="width:37.04px;">スケール</span></div><div class="cl" style="left:3.70px;top:91.16px;color:#0000FF;">&gt; ggplot(data = world) +</div><div class="cl" style="left:3.70px;top:101.82px;color:#0000FF;">+   geom_sf(color=&quot;black&quot;,fill=&quot;gray&quot;) +</div><div class="cl" style="left:3.70px;top:112.48px;color:#0000FF;">+   coord_sf(xlim=c(138,149),ylim=c(41,46),expand=TRUE) +</div><div class="cl" style="left:3.70px;top:123.14px;color:#0000FF;">+ </div><div class="cl" style="left:3.70px;top:133.80px;color:#0000FF;">+   annotation_scale(location = &quot;bl&quot;, width_hint = 0.4)</div><div class="cl" style="left:3.70px;top:144.46px;color:#0000FF;">&gt; #<span class="jc" style="width:37.04px;">変数指定</span></div><div class="cl" style="left:3.70px;top:155.12px;color:#0000FF;">&gt; world &lt;- ne_countries(scale = &quot;large&quot;, returnclass = &quot;sf&quot;)</div><div class="cl" style="left:3.70px;top:165.78px;color:#0000FF;">&gt; #<span class="jc" style="width:46.30px;">北海道地図</span> +</div><div class="cl" style="left:3.70px;top:176.44px;color:#0000FF;">&gt; ggplot(data = world) +</div><div class="cl" style="left:3.70px;top:187.10px;color:#0000FF;">+   geom_sf(color=&quot;black&quot;,fill=&quot;gray&quot;) +</div><div class="cl" style="left:3.70px;top:197.76px;color:#0000FF;">+   coord_sf(xlim=c(138,149),ylim=c(41,46),expand=TRUE) +</div><div class="cl" style="left:3.70px;top:208.42px;color:#0000FF;">+ </div><div class="cl" style="left:3.70px;top:219.08px;color:#0000FF;">+   #<span class="jc" style="width:37.04px;">スケール</span> +</div><div class="cl" style="left:3.70px;top:229.74px;color:#0000FF;">+   annotation_scale(location = &quot;bl&quot;, width_hint = 0.4) +</div><div class="cl" style="left:3.70px;top:240.40px;color:#0000FF;">+ </div><div class="cl" style="left:3.70px;top:251.06px;color:#0000FF;">+   #<span class="jc" style="width:64.82px;">北向きコンパス</span></div><div class="cl" style="left:3.70px;top:261.72px;color:#0000FF;">+   annotation_north_arrow(location = &quot;bl&quot;, which_north = &quot;true&quot;,</div><div class="cl" style="left:3.70px;top:272.38px;color:#0000FF;">+                          pad_x = unit(0.75, &quot;in&quot;), pad_y = unit(0.25, &quot;in&quot;),</div><div class="cl" style="left:3.70px;top:283.04px;color:#0000FF;">+                          style = north_arrow_fancy_orienteering)</div><div class="cl" style="left:3.70px;top:293.70px;color:#0000FF;">&gt; </div><div class="b" style="left:38.80px;top:45.60px;width:370px;height:14.8px;background:linear-gradient(90deg,#EFEFEF 0,#E4E4E4 4%,#DEDEDE 10%,#EEEEEE 20%,#E6E6E6 30%,#DADADA 42%,#ECECEC 55%,#DFDFDF 66%,#E8E8E8 76%,#D9D9D9 86%,#EAEAEA 92%,rgba(245,245,245,0.6) 97%,rgba(255,255,255,0) 100%);"></div><div class="b" style="left:14.72px;top:293.70px;width:1px;height:10.4px;background:#A8A8A8;"></div><div class="b" style="left:633.00px;top:0;width:10.80px;height:308.80px;background:#F1F1F1;"></div><svg class="b" style="left:636.40px;top:4.20px" width="5" height="3" viewBox="0 0 5 3"><path d="M0 3H5L2.5 0Z" fill="#606060"/></svg><svg class="b" style="left:636.40px;top:301.00px" width="5" height="3" viewBox="0 0 5 3"><path d="M0 0H5L2.5 3Z" fill="#8A8A8A"/></svg><div class="b" style="left:635.00px;top:285.60px;width:8px;height:11.4px;background:#C1C1C1;"></div></div>
<div class="b" style="left:656.00px;top:48.60px;width:618.80px;height:228.20px;background:#fff;border:1px solid #D8DCDF;border-radius:3px;box-sizing:border-box;"></div>
<div class="b" style="left:657.00px;top:49.60px;width:616.80px;height:15.40px;background:#E4E6E7;border-radius:2px 2px 0 0;"></div>
<div class="b" style="left:656.00px;top:48.60px;width:57.40px;height:17.00px;background:#F5F7F8;border:1px solid #D8DCDF;border-bottom:none;border-radius:3px 3px 0 0;box-sizing:border-box;"></div>
<div class="b" style="left:713.40px;top:49.10px;width:38.00px;height:15.90px;background:#ECEEEF;border:1px solid #DADEE0;border-bottom:none;border-radius:3px 3px 0 0;box-sizing:border-box;"></div>
<div class="b" style="left:751.40px;top:49.10px;width:55.40px;height:15.90px;background:#ECEEEF;border:1px solid #DADEE0;border-bottom:none;border-radius:3px 3px 0 0;box-sizing:border-box;"></div>
<div class="b" style="left:806.80px;top:49.10px;width:38.40px;height:15.90px;background:#ECEEEF;border:1px solid #DADEE0;border-bottom:none;border-radius:3px 3px 0 0;box-sizing:border-box;"></div>
<span class="t" style="left:663.00px;top:52.73px;font-size:7.7px;line-height:12px;color:#111;letter-spacing:-0.260px;font-weight:bold;">Environment</span>
<span class="t" style="left:719.60px;top:52.73px;font-size:7.7px;line-height:12px;color:#222;letter-spacing:-0.133px;font-weight:bold;">History</span>
<span class="t" style="left:758.00px;top:52.73px;font-size:7.7px;line-height:12px;color:#222;letter-spacing:-0.403px;font-weight:bold;">Connections</span>
<span class="t" style="left:813.00px;top:52.73px;font-size:7.7px;line-height:12px;color:#222;letter-spacing:-0.158px;font-weight:bold;">Tutorial</span>
<svg class="b" style="left:1246.00px;top:54.60px;" width="23" height="9" viewBox="0 0 23 9"><rect x="0.6" y="4.2" width="8.6" height="3.5" rx="0.8" fill="#E6E9EC" stroke="#97A1A9" stroke-width="0.8"/><path d="M0.8 4.5H9" stroke="#77838D" stroke-width="1.3"/><rect x="12.6" y="0.7" width="8.6" height="7" rx="0.6" fill="#EEF0F2" stroke="#97A1A9" stroke-width="0.8"/><path d="M12.4 1.2H21.4" stroke="#77838D" stroke-width="1.5"/></svg>
<div class="b" style="left:657.00px;top:65.00px;width:616.80px;height:15.00px;background:#F5F7F8;border-bottom:1px solid #DCE0E3;box-sizing:border-box;"></div>
<svg class="b" style="left:660.20px;top:68.20px;" width="14" height="11" viewBox="0 0 14 11"><path d="M0.8 3.2H4.4L5.4 4.2H10.2V9.8H0.8Z" fill="#E9C45C"/><path d="M0.6 9.9L2.4 5.6H11.8L10 9.9Z" fill="#F7DC83" stroke="#D9B24A" stroke-width="0.4"/><path d="M6.2 4.6C6.8 2.6 8.6 2 10.2 2.2V0.8L13.4 3L10.2 5.2V3.8C8.8 3.6 7.4 3.8 6.2 4.6Z" fill="#2BAE66"/></svg>
<svg class="b" style="left:678.20px;top:68.80px;" width="9.5" height="9.5" viewBox="0 0 10 10"><path d="M0.6 0.6H8L9.4 2V9.4H0.6Z" fill="#5B9BE0"/><rect x="2.2" y="0.9" width="5" height="3.2" fill="#fff"/><rect x="2.6" y="5.8" width="4.8" height="3.6" fill="#fff"/><rect x="5.3" y="6.5" width="1.3" height="2.2" fill="#5B9BE0"/></svg>
<div class="b" style="left:692.10px;top:67.80px;width:1.00px;height:10.20px;background:#D4D8DB;"></div>
<svg class="b" style="left:697.20px;top:68.40px;" width="13.4" height="10" viewBox="0 0 13.4 10"><rect x="0.5" y="1.6" width="9" height="7.8" fill="#F2F4F6" stroke="#AEB6BE" stroke-width="0.6"/><path d="M0.5 3.8H9.5M3.4 1.6V9.4M6.4 1.6V9.4" stroke="#AEB6BE" stroke-width="0.5"/><path d="M5 5.4C5.4 3.4 7.2 2.6 9 2.8V1.2L12.8 3.8L9 6.2V4.6C7.4 4.4 6 4.6 5 5.4Z" fill="#2BAE66"/></svg>
<span class="t" style="left:712.00px;top:67.80px;font-size:7.5px;line-height:12px;color:#222;letter-spacing:-0.042px;">Import Dataset</span>
<svg class="b" style="left:764.80px;top:72.60px;" width="4" height="2.4" viewBox="0 0 4 2.4"><path d="M0 0H4L2 2.4Z" fill="#333"/></svg>
<div class="b" style="left:773.70px;top:67.80px;width:1.00px;height:10.20px;background:#D4D8DB;"></div>
<svg class="b" style="left:778.40px;top:68.80px;" width="9" height="9" viewBox="0 0 9 9"><circle cx="4.5" cy="4.5" r="4.2" fill="#F0B23C"/><path d="M4.5 4.5V0.3A4.2 4.2 0 0 0 0.9 2.4Z" fill="#FCE9C4"/><circle cx="4.5" cy="4.5" r="1.2" fill="#FFF6E4"/></svg>
<span class="t" style="left:790.60px;top:67.80px;font-size:7.5px;line-height:12px;color:#222;letter-spacing:-0.131px;">435 MiB</span>
<svg class="b" style="left:821.20px;top:72.60px;" width="4" height="2.4" viewBox="0 0 4 2.4"><path d="M0 0H4L2 2.4Z" fill="#333"/></svg>
<div class="b" style="left:830.10px;top:67.80px;width:1.00px;height:10.20px;background:#D4D8DB;"></div>
<svg class="b" style="left:836.00px;top:67.20px;" width="11.4" height="11.6" viewBox="0 0 11.4 11.6"><path d="M10.6 0.6L6 6.4" stroke="#B5533C" stroke-width="1.3" stroke-linecap="round"/><path d="M3.4 5.6L7.6 8.8L5.6 11L0.6 10.2C2 9 2.8 7.4 3.4 5.6Z" fill="#E9C15A" stroke="#C99B35" stroke-width="0.4"/><path d="M3.4 5.6L7.6 8.8L8.2 7.8L4.2 4.8Z" fill="#C9862E"/></svg>
<svg class="b" style="left:1214.40px;top:70.20px;" width="8" height="7.4" viewBox="0 0 8 7.4"><path d="M0.4 0.8H7.6M0.4 2.8H7.6M0.4 4.8H7.6M0.4 6.8H7.6" stroke="#B4BBC2" stroke-width="0.7"/></svg>
<span class="t" style="left:1226.20px;top:67.91px;font-size:7.2px;line-height:12px;color:#222;letter-spacing:-0.201px;">List</span>
<svg class="b" style="left:1241.00px;top:72.60px;" width="4" height="2.4" viewBox="0 0 4 2.4"><path d="M0 0H4L2 2.4Z" fill="#333"/></svg>
<div class="b" style="left:1249.90px;top:67.80px;width:1.00px;height:10.20px;background:#D4D8DB;"></div>
<svg class="b" style="left:1254.80px;top:67.40px;" width="11" height="11" viewBox="0 0 11 11"><path d="M8.6 3.6A3.7 3.7 0 1 0 9 6.8" fill="none" stroke="#CFDCEE" stroke-width="2.1"/><path d="M10.4 0.8V5H6.2Z" fill="#CFDCEE"/></svg>
<svg class="b" style="left:1267.60px;top:72.60px;" width="4" height="2.4" viewBox="0 0 4 2.4"><path d="M0 0H4L2 2.4Z" fill="#333"/></svg>
<div class="b" style="left:657.00px;top:80.00px;width:616.80px;height:15.80px;background:#F5F7F8;border-bottom:1px solid #DCE0E3;box-sizing:border-box;"></div>
<span class="t" style="left:662.00px;top:82.80px;font-size:7.5px;line-height:12px;color:#222;letter-spacing:-0.216px;">R</span>
<svg class="b" style="left:671.00px;top:87.60px;" width="4" height="2.4" viewBox="0 0 4 2.4"><path d="M0 0H4L2 2.4Z" fill="#333"/></svg>
<div class="b" style="left:680.10px;top:82.80px;width:1.00px;height:10.20px;background:#D4D8DB;"></div>
<svg class="b" style="left:685.60px;top:82.60px;" width="11" height="11" viewBox="0 0 11 11"><rect x="3.2" y="0.6" width="6" height="6" rx="0.8" fill="#B565C9"/><rect x="4.6" y="4" width="6" height="6.4" rx="0.8" fill="#5B9BE0"/><rect x="0.4" y="2.8" width="6.2" height="6.2" rx="0.8" fill="#9CC36B"/></svg>
<span class="t" style="left:699.20px;top:82.80px;font-size:7.5px;line-height:12px;color:#222;letter-spacing:-0.104px;">Global Environment</span>
<svg class="b" style="left:767.60px;top:87.60px;" width="4" height="2.4" viewBox="0 0 4 2.4"><path d="M0 0H4L2 2.4Z" fill="#333"/></svg>
<div class="b" style="left:1187.60px;top:83.00px;width:80.80px;height:10.80px;background:#fff;border:1px solid #DDE1E4;border-radius:2px;box-sizing:border-box;"></div>
<svg class="b" style="left:1192.40px;top:84.60px;" width="8.4" height="8.4" viewBox="0 0 8.4 8.4"><circle cx="3.2" cy="3.2" r="2.6" fill="none" stroke="#B5BBC1" stroke-width="0.8"/><path d="M5.2 5.2L7.8 7.8" stroke="#A9AFB5" stroke-width="1.1"/></svg>
<div class="b" style="left:657.00px;top:95.80px;width:616.80px;height:13.80px;background:#EEF2F4;border-bottom:1px solid #DCE0E3;box-sizing:border-box;"></div>
<div class="cl" style="left:660.6px;top:98.2px;color:#222;">Data</div>
<div class="b" style="left:657.00px;top:109.60px;width:616.80px;height:13.80px;background:#fff;border-bottom:1px solid #DCE0E3;box-sizing:border-box;"></div>
<div class="b" style="left:823.90px;top:109.60px;width:1.00px;height:13.80px;background:#E3E6E9;"></div>
<svg class="b" style="left:660.00px;top:111.60px;" width="8.4" height="8.4" viewBox="0 0 8.4 8.4"><circle cx="4.2" cy="4.2" r="3.9" fill="#5C9CE0"/><circle cx="4.2" cy="4.2" r="3.9" fill="none" stroke="#4784C8" stroke-width="0.5"/><path d="M3.1 2.2V6.2L6.4 4.2Z" fill="#fff"/></svg>
<div class="cl" style="left:670.6px;top:111.45px;color:#1A1A1A;">world</div>
<div class="cl" style="left:827.8px;top:111.45px;color:#1A1A1A;">258 obs. of 169 variables</div>
<svg class="b" style="left:1252.00px;top:111.20px;" width="10.4" height="9.2" viewBox="0 0 10.4 9.2"><rect x="0.4" y="0.4" width="9.6" height="8.4" rx="0.8" fill="#F4F7FA" stroke="#C5D2E0" stroke-width="0.6"/><path d="M0.4 2.4H10M0.4 4.6H10M0.4 6.8H10M2.8 2.4V8.8M5.2 2.4V8.8M7.6 2.4V8.8" stroke="#D3DDE8" stroke-width="0.4"/><rect x="0.4" y="0.4" width="9.6" height="2" fill="#D9E3EE"/></svg>
<div class="b" style="left:656.00px;top:280.60px;width:618.80px;height:408.40px;background:#fff;border:1px solid #D8DCDF;border-radius:3px;box-sizing:border-box;"></div>
<div class="b" style="left:657.00px;top:281.60px;width:616.80px;height:15.60px;background:#E4E6E7;border-radius:2px 2px 0 0;"></div>
<div class="b" style="left:656.00px;top:281.10px;width:28.40px;height:15.90px;background:#ECEEEF;border:1px solid #DADEE0;border-bottom:none;border-radius:3px 3px 0 0;box-sizing:border-box;"></div>
<div class="b" style="left:684.40px;top:280.60px;width:30.20px;height:17.00px;background:#F5F7F8;border:1px solid #D8DCDF;border-bottom:none;border-radius:3px 3px 0 0;box-sizing:border-box;"></div>
<div class="b" style="left:714.60px;top:281.10px;width:43.80px;height:15.90px;background:#ECEEEF;border:1px solid #DADEE0;border-bottom:none;border-radius:3px 3px 0 0;box-sizing:border-box;"></div>
<div class="b" style="left:758.40px;top:281.10px;width:28.80px;height:15.90px;background:#ECEEEF;border:1px solid #DADEE0;border-bottom:none;border-radius:3px 3px 0 0;box-sizing:border-box;"></div>
<div class="b" style="left:787.20px;top:281.10px;width:36.20px;height:15.90px;background:#ECEEEF;border:1px solid #DADEE0;border-bottom:none;border-radius:3px 3px 0 0;box-sizing:border-box;"></div>
<div class="b" style="left:823.40px;top:281.10px;width:56.20px;height:15.90px;background:#ECEEEF;border:1px solid #DADEE0;border-bottom:none;border-radius:3px 3px 0 0;box-sizing:border-box;"></div>
<span class="t" style="left:663.00px;top:284.73px;font-size:7.7px;line-height:12px;color:#222;letter-spacing:-0.469px;font-weight:bold;">Files</span>
<span class="t" style="left:690.80px;top:284.73px;font-size:7.7px;line-height:12px;color:#111;letter-spacing:-0.285px;font-weight:bold;">Plots</span>
<span class="t" style="left:720.80px;top:284.73px;font-size:7.7px;line-height:12px;color:#222;letter-spacing:-0.517px;font-weight:bold;">Packages</span>
<span class="t" style="left:764.60px;top:284.73px;font-size:7.7px;line-height:12px;color:#222;letter-spacing:-0.122px;font-weight:bold;">Help</span>
<span class="t" style="left:793.80px;top:284.73px;font-size:7.7px;line-height:12px;color:#222;letter-spacing:-0.281px;font-weight:bold;">Viewer</span>
<span class="t" style="left:830.00px;top:284.73px;font-size:7.7px;line-height:12px;color:#222;letter-spacing:-0.270px;font-weight:bold;">Presentation</span>
<svg class="b" style="left:1246.00px;top:286.60px;" width="23" height="9" viewBox="0 0 23 9"><rect x="0.6" y="4.2" width="8.6" height="3.5" rx="0.8" fill="#E6E9EC" stroke="#97A1A9" stroke-width="0.8"/><path d="M0.8 4.5H9" stroke="#77838D" stroke-width="1.3"/><rect x="12.6" y="0.7" width="8.6" height="7" rx="0.6" fill="#EEF0F2" stroke="#97A1A9" stroke-width="0.8"/><path d="M12.4 1.2H21.4" stroke="#77838D" stroke-width="1.5"/></svg>
<div class="b" style="left:657.00px;top:297.00px;width:616.80px;height:14.80px;background:#F5F7F8;border-bottom:1px solid #DCE0E3;box-sizing:border-box;"></div>
<svg class="b" style="left:661.40px;top:300.80px;" width="11" height="9" viewBox="0 0 11 9"><path d="M0.6 4.5L5 0.8V3H10.2V6H5V8.2Z" fill="#9CC8EC" stroke="#7FB4E0" stroke-width="0.5"/></svg>
<svg class="b" style="left:677.80px;top:300.80px;" width="11" height="9" viewBox="0 0 11 9"><path d="M10.4 4.5L6 0.8V3H0.8V6H6V8.2Z" fill="#D5E6F4" stroke="#C5DAEC" stroke-width="0.5"/></svg>
<div class="b" style="left:692.50px;top:300.00px;width:1.00px;height:10.00px;background:#D4D8DB;"></div>
<svg class="b" style="left:698.00px;top:299.20px;" width="11" height="11.4" viewBox="0 0 11 11.4"><path d="M0.8 10.6L4.4 7" stroke="#B4783C" stroke-width="1.7" stroke-linecap="round"/><circle cx="6.6" cy="4.4" r="3.6" fill="#E4F1FB" stroke="#8DB2D6" stroke-width="0.8"/><path d="M6.6 2.4V6.4M4.6 4.4H8.6" stroke="#2BAE66" stroke-width="1.3"/></svg>
<span class="t" style="left:712.60px;top:299.80px;font-size:7.5px;line-height:12px;color:#222;letter-spacing:-0.243px;">Zoom</span>
<div class="b" style="left:737.50px;top:300.00px;width:1.00px;height:10.00px;background:#D4D8DB;"></div>
<svg class="b" style="left:742.80px;top:300.00px;" width="11" height="10" viewBox="0 0 11 10"><rect x="2.6" y="0.6" width="8" height="8.6" fill="#6FB2E8"/><path d="M2.6 5.8L5.6 3.8L8 5.4L10.6 4.2V9.2H2.6Z" fill="#F1CF5A"/><path d="M2.6 7.6H10.6V9.2H2.6Z" fill="#fff"/><path d="M0.2 3.4H3.6V2.2L5.8 4L3.6 5.8V4.6H0.2Z" fill="#555"/></svg>
<span class="t" style="left:756.20px;top:299.80px;font-size:7.5px;line-height:12px;color:#222;letter-spacing:-0.179px;">Export</span>
<svg class="b" style="left:781.00px;top:305.00px;" width="4" height="2.4" viewBox="0 0 4 2.4"><path d="M0 0H4L2 2.4Z" fill="#333"/></svg>
<div class="b" style="left:789.50px;top:300.00px;width:1.00px;height:10.00px;background:#D4D8DB;"></div>
<svg class="b" style="left:794.40px;top:300.60px;" width="11" height="9" viewBox="0 0 11 9"><rect x="3.6" y="1.2" width="7" height="7.6" fill="#fff"/><circle cx="4" cy="4" r="3.7" fill="#D93A32"/><path d="M2.4 2.4L5.6 5.6M5.6 2.4L2.4 5.6" stroke="#fff" stroke-width="1.1"/></svg>
<div class="b" style="left:809.50px;top:300.00px;width:1.00px;height:10.00px;background:#D4D8DB;"></div>
<svg class="b" style="left:815.40px;top:299.40px;" width="11.4" height="11.6" viewBox="0 0 11.4 11.6"><path d="M10.6 0.6L6 6.4" stroke="#B5533C" stroke-width="1.3" stroke-linecap="round"/><path d="M3.4 5.6L7.6 8.8L5.6 11L0.6 10.2C2 9 2.8 7.4 3.4 5.6Z" fill="#E9C15A" stroke="#C99B35" stroke-width="0.4"/><path d="M3.4 5.6L7.6 8.8L8.2 7.8L4.2 4.8Z" fill="#C9862E"/></svg>
<svg class="b" style="left:1203.60px;top:300.60px;" width="11.4" height="9.6" viewBox="0 0 11.4 9.6"><path d="M0.3 4.3Q1.8 4.5 2.3 3.2A3.7 3.7 0 0 1 8.9 3.1" fill="none" stroke="#1E96DC" stroke-width="1.35" stroke-linecap="round"/><path d="M11.1 4.7Q9.6 4.5 9.1 5.8A3.7 3.7 0 0 1 2.5 5.9" fill="none" stroke="#1E96DC" stroke-width="1.35" stroke-linecap="round"/><circle cx="5.7" cy="4.5" r="1.65" fill="#1E96DC"/></svg>
<span class="t" style="left:1217.60px;top:299.80px;font-size:7.5px;line-height:12px;color:#222;letter-spacing:-0.228px;">Publish</span>
<svg class="b" style="left:1246.80px;top:305.00px;" width="4" height="2.4" viewBox="0 0 4 2.4"><path d="M0 0H4L2 2.4Z" fill="#333"/></svg>
<div class="b" style="left:1255.70px;top:300.00px;width:1.00px;height:10.00px;background:#D4D8DB;"></div>
<svg class="b" style="left:1259.80px;top:299.80px;" width="11" height="11" viewBox="0 0 11 11"><path d="M8.6 3.6A3.7 3.7 0 1 0 9 6.8" fill="none" stroke="#D3DFEF" stroke-width="2.1"/><path d="M10.4 0.8V5H6.2Z" fill="#D3DFEF"/></svg>
<svg class="b" style="left:657.40px;top:311.80px;" width="616.2" height="375.6" viewBox="657.4 311.8 616.2 375.6"><defs><clipPath id="pc"><rect x="694.2" y="316.9" width="565.0" height="353.6"/></clipPath></defs><rect x="694.2" y="316.9" width="565.0" height="353.6" fill="#EBEBEB"/><path d="M720.5 316.9V670.5M813.8 316.9V670.5M907.1 316.9V670.5M1000.4 316.9V670.5M1093.7 316.9V670.5M1187.1 316.9V670.5M694.2 654.4H1259.2M694.2 590.1H1259.2M694.2 525.8H1259.2M694.2 461.6H1259.2M694.2 397.3H1259.2M694.2 333.0H1259.2" stroke="#fff" stroke-width="1.0" fill="none"/><g clip-path="url(#pc)" stroke="#111" stroke-width="0.85" stroke-linejoin="round"><path d="M903.8 363.4L906.2 365.6L910.0 371.2L915.0 375.6L918.1 380.0L930.0 392.5L936.2 404.4L945.0 413.8L952.5 423.1L961.2 430.6L970.0 437.5L976.2 443.1L985.0 448.1L991.2 450.2L997.5 451.6L1006.2 453.2L1008.6 454.2L1011.2 452.7L1013.1 457.9L1016.9 463.5L1026.2 466.0L1037.5 466.6L1042.5 461.6L1050.0 452.2L1056.2 447.2L1060.0 440.4L1062.5 439.1L1064.8 442.9L1063.8 447.2L1059.4 452.9L1058.8 456.6L1053.8 463.5L1051.2 469.8L1050.6 477.2L1053.1 482.9L1056.2 486.6L1061.9 487.9L1063.8 489.8L1060.0 492.2L1058.4 490.6L1058.8 493.5L1060.0 499.8L1062.5 504.1L1065.0 506.0L1065.0 508.5L1070.0 509.1L1072.5 505.4L1077.5 501.6L1083.8 500.4L1085.6 501.5L1082.5 503.5L1077.5 506.0L1073.1 509.1L1072.5 511.2L1071.2 514.4L1066.2 513.8L1060.0 515.0L1053.8 517.5L1052.5 519.4L1054.4 521.2L1050.0 522.5L1047.5 523.1L1046.2 526.2L1042.5 527.2L1039.4 525.6L1038.8 523.1L1036.9 522.8L1035.0 525.0L1034.4 527.5L1036.5 530.0L1034.4 530.6L1027.5 528.5L1021.9 530.2L1018.1 528.8L1015.0 525.4L1007.5 527.5L1000.0 532.5L992.5 538.8L985.0 546.2L977.5 555.0L971.2 565.0L968.8 570.6L969.0 583.1L966.9 590.0L964.4 595.0L961.9 592.5L959.4 588.1L951.2 583.1L942.5 580.0L933.8 575.0L927.5 572.2L920.0 567.5L914.4 561.2L910.0 560.2L906.2 558.1L903.1 554.4L897.5 551.2L892.5 550.0L886.2 551.0L880.0 554.4L870.0 560.6L862.5 565.6L859.4 571.2L857.5 570.0L855.0 563.8L850.0 556.9L845.0 552.5L838.1 552.5L831.9 556.2L827.5 563.8L825.9 569.4L827.8 573.8L833.8 578.1L839.4 583.1L846.2 581.5L850.0 584.4L855.0 591.2L861.2 596.9L866.2 598.1L869.6 602.9L863.8 606.9L860.0 609.0L851.2 604.4L846.5 606.2L846.9 603.1L845.0 601.2L842.5 605.6L836.2 609.4L833.5 613.1L834.4 618.1L831.2 621.2L825.6 623.8L821.9 628.8L816.2 626.2L814.4 621.2L812.5 615.6L815.0 608.8L819.4 601.9L820.6 593.8L817.5 586.9L811.2 581.9L805.0 576.2L802.2 570.6L803.8 566.2L806.2 561.2L805.6 551.9L807.5 547.5L814.4 546.2L820.0 541.9L823.1 537.8L826.9 541.2L832.5 531.2L838.1 525.6L836.2 519.4L828.8 510.6L830.0 505.6L833.8 503.8L835.6 501.9L850.6 513.5L856.2 512.5L860.2 511.0L861.2 514.4L867.5 516.9L870.0 516.9L880.0 506.8L881.2 500.0L876.5 491.6L877.5 488.5L875.6 479.8L880.0 473.2L888.1 468.5L891.5 462.2L891.2 456.0L890.6 450.0L891.0 441.2L895.0 433.8L897.5 422.5L897.5 412.5L896.2 405.0L891.2 395.0L888.0 389.0L886.6 383.5L888.1 378.1L890.0 371.2L890.6 368.4L892.0 368.4L893.8 371.2L898.8 370.0L901.2 367.5L901.9 364.6ZM688.0 310.0L727.8 310.0L724.9 316.9L723.6 320.0L718.4 325.2L715.8 330.4L710.6 334.7L705.3 345.1L700.1 349.5L694.0 355.1L688.0 360.5ZM901.6 310.0L902.1 316.9L903.1 330.0L910.6 339.8L913.8 333.1L916.2 330.6L919.4 316.9L921.0 310.0ZM972.2 310.0L972.2 316.9L972.8 330.6L973.5 331.5L975.6 323.8L977.9 316.9L980.0 310.0ZM858.5 366.9L860.0 368.8L863.1 368.8L863.8 372.5L861.9 380.2L860.6 377.5L859.4 371.2ZM786.9 576.2L792.5 574.1L793.5 576.0L791.2 578.8L790.0 584.4L787.9 587.1L786.6 585.6L786.0 580.0ZM1065.6 472.9L1070.0 468.5L1077.5 462.2L1082.5 454.1L1090.0 444.8L1093.8 438.5L1098.1 429.1L1101.2 428.5L1106.2 431.6L1112.5 434.1L1117.5 432.2L1120.6 432.9L1119.4 437.2L1116.9 438.5L1113.8 437.9L1110.0 442.2L1106.2 444.8L1100.0 445.4L1096.2 448.5L1090.0 455.4L1089.4 459.1L1085.0 462.2L1083.1 466.0L1077.5 468.5L1073.8 471.6L1073.1 478.5L1072.5 483.5L1071.9 479.1L1070.0 479.8L1066.9 478.5ZM1121.2 474.1L1132.5 469.1L1137.5 471.6L1136.9 474.1L1125.0 480.4L1121.9 479.1ZM1097.0 492.4L1100.6 490.5L1104.6 491.4L1103.8 494.2L1100.6 496.4L1098.8 494.6ZM1133.1 431.9L1135.0 428.8L1137.5 426.2L1136.2 422.5L1137.8 421.5L1139.0 425.0L1141.2 423.1L1140.0 419.4L1141.9 418.4L1144.4 421.2L1147.5 418.1L1150.0 412.5L1146.2 411.2L1144.8 408.8L1146.9 407.5L1150.0 410.0L1151.9 405.6L1162.5 399.4L1163.8 392.5L1165.6 390.6L1168.1 393.1L1171.2 391.9L1175.0 385.6L1180.6 382.8L1181.9 380.0L1180.2 372.5L1184.4 369.4L1186.2 373.1L1188.1 380.0L1195.0 380.0L1202.5 378.8L1207.5 372.5L1213.8 366.2L1222.5 362.5L1225.6 364.4L1226.9 367.5L1224.4 370.0L1226.9 373.1L1223.8 376.9L1215.0 377.5L1207.5 381.2L1198.8 383.1L1191.2 391.2L1183.8 399.4L1176.2 400.6L1173.1 396.9L1169.4 400.0L1170.6 402.5L1165.0 408.8L1158.8 413.8L1152.5 421.2L1148.8 425.6L1145.0 425.0L1140.0 430.6L1138.1 434.4L1134.4 433.1ZM1264.6 342.0L1259.2 350.6L1253.8 359.4L1264.6 359.4ZM856.2 619.8L860.0 623.1L866.2 626.2L871.2 630.6L876.9 631.2L881.6 626.9L880.0 636.2L878.8 650.0L878.8 662.5L879.8 670.5L880.4 677.0L806.0 677.0L813.8 670.5L817.5 669.4L823.8 668.8L827.5 665.0L828.1 658.1L828.1 652.5L828.1 649.4L825.0 646.2L828.8 644.4L829.4 637.5L832.5 641.2L835.0 643.1L838.1 640.6L841.9 640.6L843.1 643.8L843.8 650.0L845.0 655.0L845.6 660.5L853.1 660.0L855.6 653.8L859.4 660.0L870.6 660.0L871.2 652.5L873.1 643.8L871.9 638.8L868.8 636.9L863.8 641.9L857.5 643.1L851.2 645.6L849.0 641.9L851.2 633.8L853.1 626.2Z" fill="#BEBEBE"/><path d="M867 382.4Q870 379.8 873.8 382.4Q876.4 386 874.6 390Q871.8 392.4 868 389.6Q865.6 386 867 382.4Z" fill="#BEBEBE"/><circle cx="783.4" cy="621.5" r="0.9" fill="#BEBEBE"/><path d="M985.6 449.4L988.8 455.0L997.5 455.6L998.1 452.3L991.5 450.6ZM1005.0 459.6L1008.0 454.6L1009.4 455.0L1007.5 460.2ZM1057.4 487.6L1061.6 488.6L1062.6 489.8L1060.0 491.4L1058.6 490.0ZM1058.8 504.2L1061.2 506.6L1064.4 506.4L1062.0 504.8Z" fill="#EBEBEB"/></g><path d="M720.5 670.5v2.6M813.8 670.5v2.6M907.1 670.5v2.6M1000.4 670.5v2.6M1093.7 670.5v2.6M1187.1 670.5v2.6M694.2 654.4h-2.6M694.2 590.1h-2.6M694.2 525.8h-2.6M694.2 461.6h-2.6M694.2 397.3h-2.6M694.2 333.0h-2.6" stroke="#333" stroke-width="0.9" fill="none"/><g font-family="Liberation Sans,sans-serif" font-size="8.2" fill="#4D4D4D"><text x="720.1" y="681.8" text-anchor="middle">138°E</text><text x="813.4" y="681.8" text-anchor="middle">140°E</text><text x="906.7" y="681.8" text-anchor="middle">142°E</text><text x="1000.0" y="681.8" text-anchor="middle">144°E</text><text x="1093.3" y="681.8" text-anchor="middle">146°E</text><text x="1186.7" y="681.8" text-anchor="middle">148°E</text><text x="689.6" y="657.5" text-anchor="end">41°N</text><text x="689.6" y="593.2" text-anchor="end">42°N</text><text x="689.6" y="528.9" text-anchor="end">43°N</text><text x="689.6" y="464.7" text-anchor="end">44°N</text><text x="689.6" y="400.4" text-anchor="end">45°N</text><text x="689.6" y="336.1" text-anchor="end">46°N</text></g><rect x="700.7" y="658" width="173.8" height="6.7" fill="#fff" stroke="#000" stroke-width="0.7"/><rect x="700.7" y="658" width="58.3" height="6.7" fill="#000"/><rect x="816.2" y="658" width="58.3" height="6.7" fill="#000"/><text x="877.9" y="664.5" font-family="Liberation Sans,sans-serif" font-size="7.2" fill="#000" stroke="#000" stroke-width="0.15">300 km</text><circle cx="761.25" cy="639.4" r="11.1" fill="none" stroke="#000" stroke-width="0.6"/><path d="M761.25 624.4L751.25 650.9L761.25 643.75Z" fill="#fff" stroke="#000" stroke-width="0.6" stroke-linejoin="miter"/><path d="M761.25 624.4L771.25 650.9L761.25 643.75Z" fill="#000" stroke="#000" stroke-width="0.6"/><text x="761.1" y="622.4" text-anchor="middle" font-family="Liberation Sans,sans-serif" font-size="8.2" fill="#222">N</text></svg>
</body></html>
